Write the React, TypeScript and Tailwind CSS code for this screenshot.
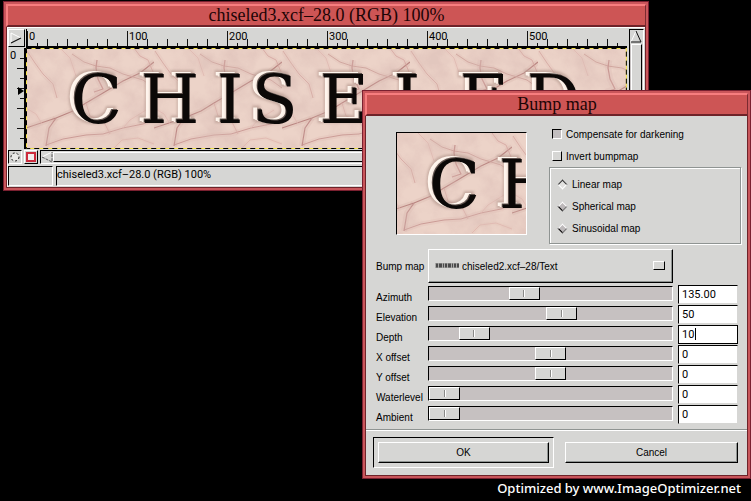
import type { ReactNode } from "react";

const WORD = [
  { ch: "C", x: 45 },
  { ch: "H", x: 115 },
  { ch: "I", x: 191 },
  { ch: "S", x: 226 },
  { ch: "E", x: 294 },
  { ch: "L", x: 368 },
  { ch: "E", x: 434 },
  { ch: "D", x: 501 },
];

const VEINS = [
  { d: "M0 80 L12 76 L30 70 L47 63 L60 55 L77 45 L97 33 L114 25 L128 14", w: 1.1, c: "#b98581" },
  { d: "M20 97 L37 91 L60 87 L77 86 L97 80 L117 76 L128 71", w: 1, c: "#cb9b96" },
  { d: "M30 70 L23 80 L20 98", w: 1.2, c: "#c08e8a" },
  { d: "M1 3 L9 15 L17 26 L27 36 L31 50", w: 1, c: "#d8ada6" },
  { d: "M46 6 L58 14 L70 18 L84 20 L97 26 L117 32 L128 40", w: 0.9, c: "#cda09a" },
  { d: "M71 12 L70 20 L72 31 L77 41 L68 44", w: 1.3, c: "#c99893" },
  { d: "M60 55 L64 68 L78 74 L84 86", w: 0.8, c: "#d8aca5" },
  { d: "M97 80 L104 72 L120 62", w: 0.8, c: "#dfb8af" },
  { d: "M34 0 L44 10 L50 28", w: 0.8, c: "#e0b9b0" },
  { d: "M0 60 L10 66 L16 76", w: 0.8, c: "#e0b9b0" },
  { d: "M88 100 L96 92 L112 90 L128 96", w: 0.8, c: "#dfb5ad" },
  { d: "M108 0 L114 8 L122 12 L127 24", w: 0.9, c: "#d6a8a2" },
];

function ChiseledArt({ id, letters, shift = 0 }: { id: string; letters: typeof WORD; shift?: number }) {
  return (
    <>
      <defs>
        <filter id={`${id}-soft`} x="-5%" y="-5%" width="110%" height="110%">
          <feGaussianBlur stdDeviation="0.6" />
        </filter>
        <filter id={`${id}-cloud`} x="0" y="0" width="100%" height="100%">
          <feTurbulence type="fractalNoise" baseFrequency="0.04" numOctaves="5" seed="7" />
          <feColorMatrix values="0 0 0 0 0.7  0 0 0 0 0.5  0 0 0 0 0.46  2.4 0 0 0 -0.9" />
        </filter>
        <filter id={`${id}-chisel`} x="-10%" y="-10%" width="120%" height="120%" colorInterpolationFilters="sRGB">
          <feMorphology in="SourceAlpha" operator="dilate" radius="1.5" result="wide" />
          <feOffset in="wide" dx="-4" dy="-2" result="rimShape" />
          <feGaussianBlur in="rimShape" stdDeviation="1" result="rimSoft" />
          <feFlood floodColor="#b0948a" floodOpacity="0.6" />
          <feComposite in2="rimSoft" operator="in" result="rim" />
          <feOffset in="SourceAlpha" dx="-5" dy="-2" result="lightShape" />
          <feGaussianBlur in="lightShape" stdDeviation="0.5" result="lightSoft" />
          <feFlood floodColor="#fff6ee" />
          <feComposite in2="lightSoft" operator="in" result="light" />
          <feOffset in="SourceAlpha" dx="-3" dy="-1" result="nearShape" />
          <feFlood floodColor="#fbeee5" />
          <feComposite in2="nearShape" operator="in" result="near" />
          <feOffset in="SourceAlpha" dx="-1" dy="-1" result="midShape" />
          <feFlood floodColor="#5e514c" />
          <feComposite in2="midShape" operator="in" result="mid" />
          <feMerge>
            <feMergeNode in="rim" />
            <feMergeNode in="light" />
            <feMergeNode in="near" />
            <feMergeNode in="mid" />
            <feMergeNode in="SourceGraphic" />
          </feMerge>
        </filter>
        <pattern id={`${id}-stone`} width="128" height="128" patternUnits="userSpaceOnUse">
          <rect width="128" height="128" fill="#ecd3c8" />
          <g fill="none" strokeLinejoin="round" filter={`url(#${id}-soft)`}>
            {VEINS.map((v) => (
              <path key={v.d} d={v.d} stroke={v.c} strokeWidth={v.w * 5} opacity="0.14" />
            ))}
            {VEINS.map((v) => (
              <path key={v.d} d={v.d} stroke={v.c} strokeWidth={v.w} />
            ))}
          </g>
        </pattern>
      </defs>
      <g transform={`translate(${-shift} 0)`}>
        <rect width="640" height="110" fill={`url(#${id}-stone)`} />
        <rect width="640" height="110" filter={`url(#${id}-cloud)`} opacity="0.5" />
        <g fontFamily='"DejaVu Serif", serif' fontSize="67" fill="#0b0807" filter={`url(#${id}-chisel)`}>
          {letters.map((l) => (
            <text key={l.x} x={l.x} y="75">
              {l.ch}
            </text>
          ))}
        </g>
      </g>
    </>
  );
}

function Frame({ title, className, children }: { title: string; className: string; children: ReactNode }) {
  return (
    <section aria-label={title} className={`border border-[#7a2030] ${className}`}>
      <div className="border-2 border-[#c9565b]">
        <h2 className="h-[23px] border-t-2 border-r border-b-2 border-l-2 border-t-[#f77d7f] border-r-[#7a2a30] border-b-[#6e2329] border-l-[#f77d7f] bg-[#cd5555] text-center font-['Liberation_Serif',serif] text-[18px] leading-[18px] text-[#1c0405]">
          {title}
        </h2>
        <div className="border border-t-0 border-[#6e2329] bg-[#d6d6d4]">{children}</div>
      </div>
    </section>
  );
}

function TopRuler() {
  const ticks = Array.from({ length: 60 }, (_, i) => i * 10);
  return (
    <svg className="block h-[19px] w-full border-b-2 border-l border-black" role="img" aria-label="Horizontal ruler">
      {ticks.map((t) => (
        <rect key={t} x={t} y={t % 100 === 0 ? 2 : t % 20 === 0 ? 10 : 14} width="1" height="16" fill="#111" />
      ))}
      {[0, 100, 200, 300, 400, 500].map((n) => (
        <text key={n} x={n + 2} y="11" fontSize="11" fontFamily="Roboto, sans-serif" fill="#000">
          {n}
        </text>
      ))}
    </svg>
  );
}

function SideRuler() {
  return (
    <svg className="block h-[101px] w-full border-r-2 border-black" role="img" aria-label="Vertical ruler">
      <text x="2" y="11" fontSize="11" fontFamily="Roboto, sans-serif" fill="#000">
        0
      </text>
      {[10, 20, 30, 40, 50, 60, 70, 80, 90].map((t) => (
        <rect key={t} x={t % 20 === 0 ? 9 : 12} y={t} width="8" height="1" fill="#111" />
      ))}
      <path d="M10 39 L16 43 L10 47 Z" fill="#000" />
    </svg>
  );
}

const SUNKEN = "border border-t-black border-l-black border-r-white border-b-white";
const RAISED = "border border-t-white border-l-white border-r-black border-b-black";

function ImageWindow() {
  return (
    <Frame title="chiseled3.xcf–28.0 (RGB) 100%" className="absolute top-px left-[3px] w-[86%]">
      <div className="border-t border-l border-white py-px">
        <div className="grid grid-cols-[18px_1fr_18px]">
          <button type="button" aria-label="Menu" className={`mr-px h-[18px] ${RAISED}`}>
            <svg viewBox="0 0 15 16" className="block h-4 w-[15px]">
              <path d="M2 3 L2 13 M2 3 L12 8" stroke="#fff" fill="none" />
              <path d="M2 13 L12 8" stroke="#111" strokeWidth="1.2" />
            </svg>
          </button>
          <TopRuler />
          <div className={`row-span-2 mr-px ml-[2px] bg-[#c6c1c1] ${SUNKEN}`}>
            <svg viewBox="0 0 13 14" className="block h-[14px] w-full">
              <rect width="13" height="14" fill="#d6d6d4" />
              <path d="M6 1 L1 12" stroke="#fff" fill="none" />
              <path d="M6 1 L11 12 L1 12" stroke="#111" fill="none" />
            </svg>
            <div className="mx-px h-[103px] border border-t-white border-r-black border-b-black border-l-white bg-[#d6d6d4]" />
          </div>
          <SideRuler />
          <svg className="block h-[101px] w-full" role="img" aria-label="Canvas: CHISELED on pink marble">
            <ChiseledArt id="main" letters={WORD} />
            <rect x="0.5" y="0.5" width="600" height="100" className="w-[calc(100%-1px)]" fill="none" stroke="#f4e34a" />
            <rect x="0.5" y="0.5" width="600" height="100" className="w-[calc(100%-1px)]" fill="none" stroke="#000" strokeDasharray="5 4" />
          </svg>
        </div>
        <div className="mt-px flex h-[14px]">
          <button type="button" aria-label="Quick mask off" className={`w-[14px] ${SUNKEN}`}>
            <svg viewBox="0 0 12 12" className="block size-3">
              <circle cx="6" cy="6" r="4" fill="#e8e8e6" stroke="#111" strokeDasharray="2 2" />
            </svg>
          </button>
          <button type="button" aria-label="Quick mask on" className={`ml-[2px] w-[14px] ${RAISED}`}>
            <svg viewBox="0 0 12 12" className="block size-3">
              <rect x="2" y="2" width="8" height="8" fill="#f2eded" stroke="#cc2a3c" strokeWidth="2" />
            </svg>
          </button>
          <div className={`mr-4 ml-[2px] flex grow bg-[#d6d6d4] ${SUNKEN}`}>
            <svg viewBox="0 0 12 12" className="block size-3">
              <path d="M11 1 L1 6" stroke="#fff" fill="none" />
              <path d="M1 6 L11 11 L11 1" stroke="#555" strokeDasharray="3 1" fill="none" />
            </svg>
            <div className={`my-px grow ${RAISED}`} />
          </div>
        </div>
        <div className="mt-[2px] mr-1 flex gap-[3px]">
          <div className={`w-[45px] ${SUNKEN}`} />
          <p className={`h-5 grow font-[Roboto,sans-serif] text-[11px] leading-4 text-black ${SUNKEN}`}>
            chiseled3.xcf–28.0 (RGB) 100%
          </p>
        </div>
      </div>
    </Frame>
  );
}

function Check({ label, on }: { label: string; on?: boolean }) {
  return (
    <label className="ml-[3px] flex h-[22px] items-center gap-1">
      <input
        type="checkbox"
        defaultChecked={on}
        className="size-[10px] appearance-none border border-t-white border-r-black border-b-black border-l-white bg-[#d6d6d4] checked:border-t-black checked:border-r-white checked:border-b-white checked:border-l-black checked:bg-[#c3bfc0]"
      />
      {label}
    </label>
  );
}

function Radio({ label, on }: { label: string; on?: boolean }) {
  return (
    <label className="ml-2 flex h-[22px] items-center gap-[5px]">
      <input
        type="radio"
        name="map-type"
        defaultChecked={on}
        className="m-px size-[7px] rotate-45 appearance-none border border-t-white border-r-[#777] border-b-black border-l-white bg-[#bdb9ba] checked:border-t-[#333] checked:border-r-white checked:border-b-white checked:border-l-[#333] checked:bg-[#e2e2e0]"
      />
      {label}
    </label>
  );
}

const SLIDERS = [
  { id: "azimuth", label: "Azimuth", min: 0, max: 360, value: 135, text: "135.00" },
  { id: "elevation", label: "Elevation", min: 0.5, max: 90, value: 50, text: "50" },
  { id: "depth", label: "Depth", min: 1, max: 65, value: 10, text: "10" },
  { id: "xoffset", label: "X offset", min: -1000, max: 1000, value: 0, text: "0" },
  { id: "yoffset", label: "Y offset", min: -1000, max: 1000, value: 0, text: "0" },
  { id: "waterlevel", label: "Waterlevel", min: 0, max: 255, value: 0, text: "0" },
  { id: "ambient", label: "Ambient", min: 0, max: 255, value: 0, text: "0" },
];

function SliderRow({ s }: { s: (typeof SLIDERS)[number] }) {
  const active = s.id === "depth";
  return (
    <div className="flex h-5 items-start">
      <label htmlFor={s.id} className="w-[52px] shrink-0 pt-[5px] leading-4">
        {s.label}
      </label>
      <input
        id={s.id}
        type="range"
        min={s.min}
        max={s.max}
        step="any"
        defaultValue={s.value}
        className="mt-px h-[15px] min-w-0 grow appearance-none border border-t-black border-r-white border-b-white border-l-black bg-[#c6c1c1] [&::-webkit-slider-thumb]:h-[13px] [&::-webkit-slider-thumb]:w-[31px] [&::-webkit-slider-thumb]:appearance-none [&::-webkit-slider-thumb]:border [&::-webkit-slider-thumb]:border-t-white [&::-webkit-slider-thumb]:border-r-black [&::-webkit-slider-thumb]:border-b-black [&::-webkit-slider-thumb]:border-l-white [&::-webkit-slider-thumb]:bg-[#d6d6d4] [&::-webkit-slider-thumb]:bg-[linear-gradient(90deg,#8a8a88_50%,#fff_50%)] [&::-webkit-slider-thumb]:bg-[length:2px_7px] [&::-webkit-slider-thumb]:bg-center [&::-webkit-slider-thumb]:bg-no-repeat"
      />
      <span
        className={
          active
            ? "relative ml-[5px] h-[19px] w-[60px] shrink-0 border border-black bg-white"
            : "relative ml-[5px] h-[19px] w-[60px] shrink-0 border border-t-black border-r-[#d6d6d4] border-b-[#d6d6d4] border-l-black bg-white"
        }
      >
        <input
          type="text"
          aria-label={`${s.label} value`}
          defaultValue={s.text}
          className="block h-[17px] w-full bg-transparent pl-[3px] font-[Roboto,sans-serif] text-[11px] leading-4 outline-none"
        />
        {active && <span className="absolute top-[2px] left-4 h-3 w-px bg-black" />}
      </span>
    </div>
  );
}

function BumpMapDialog() {
  return (
    <Frame title="Bump map" className="absolute top-[90px] left-[362px] w-[389px]">
      <form
        className="font-['Liberation_Sans',sans-serif] text-[10px] text-black"
        onSubmit={(e) => e.preventDefault()}
      >
        <div className="pr-[9px] pl-[10px]">
          <div className="flex pt-[7px]">
            <div className="mt-[9px] ml-5 h-[103px] w-[131px] shrink-0 border border-t-black border-r-white border-b-white border-l-black">
              <svg className="block size-full" role="img" aria-label="Preview">
                <ChiseledArt id="preview" letters={WORD.slice(0, 2)} shift={13} />
              </svg>
            </div>
            <div className="-mr-[3px] ml-[22px] grow">
              <Check label="Compensate for darkening" on />
              <Check label="Invert bumpmap" />
              <fieldset className="h-[77px] border border-[#8f9492] py-[5px] shadow-[1px_1px_0_#fff,inset_1px_1px_0_#fff]">
                <legend className="sr-only">Map type</legend>
                <Radio label="Linear map" on />
                <Radio label="Spherical map" />
                <Radio label="Sinusoidal map" />
              </fieldset>
            </div>
          </div>
          <div className="mt-[5px] flex items-center">
            <label htmlFor="source" className="w-[52px] shrink-0 whitespace-nowrap">
              Bump map
            </label>
            <div className="relative mr-[65px] grow">
              <select
                id="source"
                className="block h-[34px] w-full appearance-none border border-t-white border-r-black border-b-black border-l-white bg-[#d6d6d4] pl-[33px] shadow-[inset_-1px_-1px_0_#8f9492]"
              >
                <option>chiseled2.xcf–28/Text</option>
              </select>
              <svg viewBox="0 0 24 5" className="pointer-events-none absolute top-[14px] left-[7px] h-[5px] w-6">
                <rect width="24" height="5" fill="#a9a9a7" />
                <path d="M1 2.500H24" stroke="#4a4a4a" strokeWidth="4" strokeDasharray="2 1 3 1 1 1" />
              </svg>
              <span className="pointer-events-none absolute top-3 right-2 h-[9px] w-3 border border-t-white border-r-black border-b-black border-l-white" />
            </div>
          </div>
          <div className="mt-[2px]">
            {SLIDERS.map((s) => (
              <SliderRow key={s.id} s={s} />
            ))}
          </div>
        </div>
        <div className="mt-1 flex items-center gap-[11px] border-t border-[#8f9492] pt-[7px] pr-[9px] pb-[7px] pl-[7px] shadow-[inset_0_1px_0_#fff]">
          <div className="flex-1 border border-t-black border-r-white border-b-white border-l-black p-1">
            <button
              type="submit"
              className="block h-[21px] w-full border border-t-white border-r-black border-b-black border-l-white leading-4 shadow-[inset_-1px_-1px_0_#8f9492]"
            >
              OK
            </button>
          </div>
          <button
            type="button"
            className="h-[21px] w-[173px] border border-t-white border-r-black border-b-black border-l-white leading-4 shadow-[inset_-1px_-1px_0_#8f9492]"
          >
            Cancel
          </button>
        </div>
      </form>
    </Frame>
  );
}

export default function App() {
  return (
    <main className="relative flex min-h-screen flex-col justify-end overflow-hidden bg-black">
      <ImageWindow />
      <BumpMapDialog />
      <p className="pr-[10px] pb-1 text-right font-['Noto_Sans',sans-serif] text-[13px] leading-[18px] font-medium text-white">
        Optimized by www.ImageOptimizer.net
      </p>
    </main>
  );
}
